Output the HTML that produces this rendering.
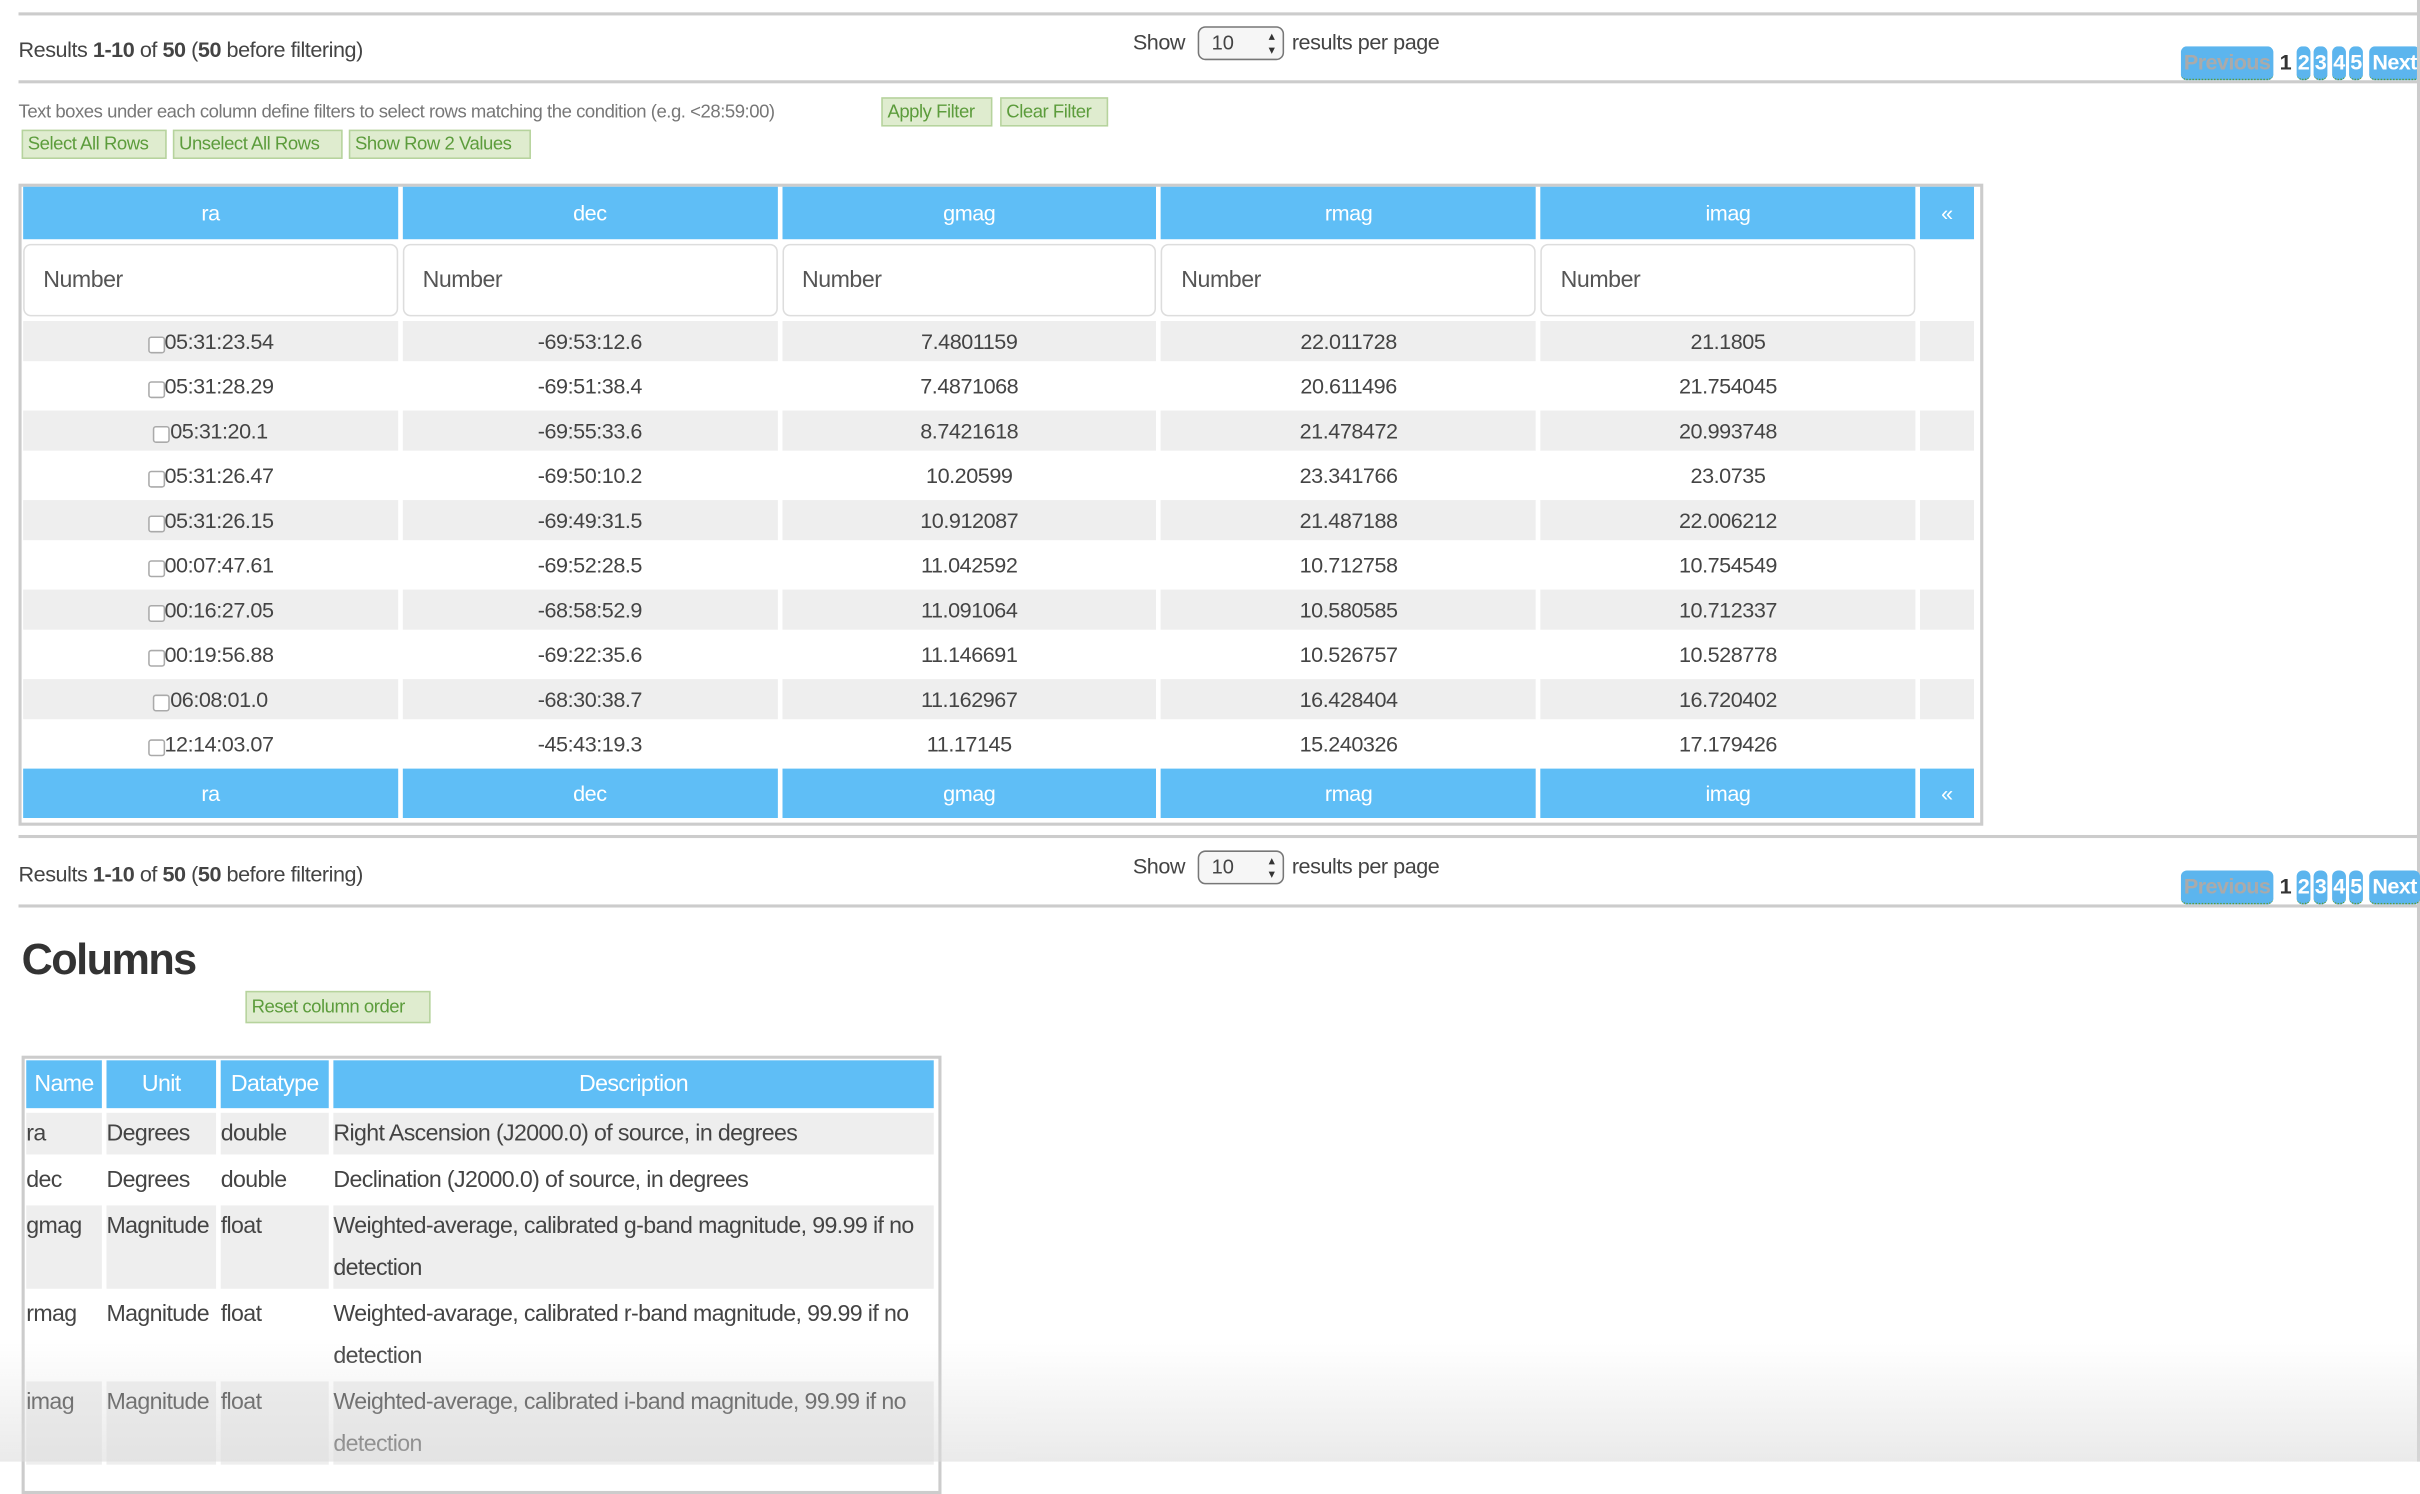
<!DOCTYPE html>
<html><head><meta charset="utf-8"><style>
html,body{margin:0;padding:0;background:#fff;overflow:hidden;width:2420px;height:1462px}
#w{position:absolute;left:0;top:0;width:1568px;height:947px;transform:scale(1.5434);transform-origin:0 0;font-family:"Liberation Sans",sans-serif;color:#444}
.a{position:absolute}
.hl{position:absolute;left:12px;right:0;height:2px;background:#ccc}
.res{font-size:14px;letter-spacing:-0.3px}
.btn{position:absolute;background:#dfeccf;border:1px solid #b6d39d;color:#5c9c3c;font-size:12px;letter-spacing:-0.3px;line-height:17px;padding:0 3px;box-sizing:border-box;height:19px;white-space:nowrap}
.sel{position:absolute;width:56px;height:22px;border:1px solid #777;border-radius:5px;box-sizing:border-box;font-size:13px;line-height:20px;padding-left:8px;background:#f6f6f6}
.sel:after{content:"▴\A▾";white-space:pre;position:absolute;right:5px;top:1px;font-size:8px;line-height:9px;color:#333}
.pg{position:absolute;top:30px;height:21px;font-weight:bold;font-size:14px;line-height:21px;color:#fff;letter-spacing:-0.4px}
.pb{background:#5cb5ee;border-radius:4px;border-bottom:1px dotted #5a9a3a;text-align:center}
table{border-collapse:separate;border-spacing:3px;position:absolute}
td,th{padding:0;text-align:center;font-weight:normal;font-size:14px;letter-spacing:-0.3px}
th{background:#5fbef6;color:#fff}
tr.g td{background:#eee}
.inp{border:1px solid #ddd;border-radius:5px;height:47px;box-sizing:border-box;text-align:left;padding-left:12px;line-height:45px;font-size:15px;color:#555;background:#fff}
.cb{display:inline-block;width:9px;height:9px;border:1px solid #aaa;border-radius:2px;vertical-align:-3px;background:#fff}
#ct td{text-align:left;vertical-align:top;line-height:27px;font-size:15px;letter-spacing:-0.4px}
#ct th{font-size:15px;height:31px;letter-spacing:-0.4px}
</style></head><body><div id="w">
<div class="hl" style="top:8px"></div>
<div class="a res" style="left:12px;top:24px">Results <b>1-10</b> of <b>50</b> (<b>50</b> before filtering)</div>
<div class="a res" style="left:734px;top:19px">Show</div>
<div class="sel" style="left:776px;top:17px">10</div>
<div class="a res" style="left:837px;top:19px">results per page</div>
<div class="hl" style="top:52px"></div>
<div class="pg pb" style="left:1413px;width:60px;color:#aaa">Previous</div>
<div class="pg" style="left:1477px;color:#333">1</div>
<div class="pg pb" style="left:1488px;width:9px">2</div>
<div class="pg pb" style="left:1499px;width:9px">3</div>
<div class="pg pb" style="left:1511px;width:9px">4</div>
<div class="pg pb" style="left:1522px;width:9px">5</div>
<div class="pg pb" style="left:1535px;width:33px">Next</div>
<div class="a" style="left:1566px;top:0;width:2px;height:947px;background:#ccc"></div>

<div class="a" style="left:12px;top:65px;font-size:12px;letter-spacing:-0.3px;color:#777">Text boxes under each column define filters to select rows matching the condition (e.g. &lt;28:59:00)</div>
<div class="btn" style="left:571px;top:63px;width:72px">Apply Filter</div>
<div class="btn" style="left:648px;top:63px;width:70px">Clear Filter</div>
<div class="btn" style="left:14px;top:84px;width:94px">Select All Rows</div>
<div class="btn" style="left:112px;top:84px;width:110px">Unselect All Rows</div>
<div class="btn" style="left:226px;top:84px;width:118px">Show Row 2 Values</div>

<div class="a" style="left:12px;top:119px;width:1269px;height:412px;border:2px solid #ccc"></div>
<table style="left:12px;top:118px;width:1270px">
<colgroup><col style="width:243px"><col style="width:243px"><col style="width:243px"><col style="width:243px"><col style="width:243px"><col style="width:35px"></colgroup>
<tr style="height:34px"><th>ra</th><th>dec</th><th>gmag</th><th>rmag</th><th>imag</th><th>«</th></tr>
<tr><td><div class="inp">Number</div></td><td><div class="inp">Number</div></td><td><div class="inp">Number</div></td><td><div class="inp">Number</div></td><td><div class="inp">Number</div></td><td></td></tr>
<tr class="g" style="height:26px"><td><span class="cb"></span>05:31:23.54</td><td>-69:53:12.6</td><td>7.4801159</td><td>22.011728</td><td>21.1805</td><td></td></tr>
<tr style="height:26px"><td><span class="cb"></span>05:31:28.29</td><td>-69:51:38.4</td><td>7.4871068</td><td>20.611496</td><td>21.754045</td><td></td></tr>
<tr class="g" style="height:26px"><td><span class="cb"></span>05:31:20.1</td><td>-69:55:33.6</td><td>8.7421618</td><td>21.478472</td><td>20.993748</td><td></td></tr>
<tr style="height:26px"><td><span class="cb"></span>05:31:26.47</td><td>-69:50:10.2</td><td>10.20599</td><td>23.341766</td><td>23.0735</td><td></td></tr>
<tr class="g" style="height:26px"><td><span class="cb"></span>05:31:26.15</td><td>-69:49:31.5</td><td>10.912087</td><td>21.487188</td><td>22.006212</td><td></td></tr>
<tr style="height:26px"><td><span class="cb"></span>00:07:47.61</td><td>-69:52:28.5</td><td>11.042592</td><td>10.712758</td><td>10.754549</td><td></td></tr>
<tr class="g" style="height:26px"><td><span class="cb"></span>00:16:27.05</td><td>-68:58:52.9</td><td>11.091064</td><td>10.580585</td><td>10.712337</td><td></td></tr>
<tr style="height:26px"><td><span class="cb"></span>00:19:56.88</td><td>-69:22:35.6</td><td>11.146691</td><td>10.526757</td><td>10.528778</td><td></td></tr>
<tr class="g" style="height:26px"><td><span class="cb"></span>06:08:01.0</td><td>-68:30:38.7</td><td>11.162967</td><td>16.428404</td><td>16.720402</td><td></td></tr>
<tr style="height:26px"><td><span class="cb"></span>12:14:03.07</td><td>-45:43:19.3</td><td>11.17145</td><td>15.240326</td><td>17.179426</td><td></td></tr>
<tr style="height:32px"><th>ra</th><th>dec</th><th>gmag</th><th>rmag</th><th>imag</th><th>«</th></tr>
</table>

<div class="hl" style="top:541px"></div>
<div class="a res" style="left:12px;top:558px">Results <b>1-10</b> of <b>50</b> (<b>50</b> before filtering)</div>
<div class="a res" style="left:734px;top:553px">Show</div>
<div class="sel" style="left:776px;top:551px">10</div>
<div class="a res" style="left:837px;top:553px">results per page</div>
<div class="hl" style="top:586px"></div>
<div class="pg pb" style="left:1413px;top:564px;width:60px;color:#aaa">Previous</div>
<div class="pg" style="left:1477px;top:564px;color:#333">1</div>
<div class="pg pb" style="left:1488px;top:564px;width:9px">2</div>
<div class="pg pb" style="left:1499px;top:564px;width:9px">3</div>
<div class="pg pb" style="left:1511px;top:564px;width:9px">4</div>
<div class="pg pb" style="left:1522px;top:564px;width:9px">5</div>
<div class="pg pb" style="left:1535px;top:564px;width:33px">Next</div>

<div class="a" style="left:14px;top:606px;font-size:28px;font-weight:bold;letter-spacing:-1px;color:#333">Columns</div>
<div class="btn" style="left:159px;top:642px;width:120px;height:21px;line-height:19px">Reset column order</div>

<div class="a" style="left:14px;top:684px;width:592px;height:280px;border:2px solid #ccc"></div>
<table id="ct" style="left:14px;top:684px;width:594px">
<colgroup><col style="width:49px"><col style="width:71px"><col style="width:70px"><col></colgroup>
<tr><th>Name</th><th>Unit</th><th>Datatype</th><th>Description</th></tr>
<tr class="g"><td>ra</td><td>Degrees</td><td>double</td><td>Right Ascension (J2000.0) of source, in degrees</td></tr>
<tr><td>dec</td><td>Degrees</td><td>double</td><td>Declination (J2000.0) of source, in degrees</td></tr>
<tr class="g"><td>gmag</td><td>Magnitude</td><td>float</td><td>Weighted-average, calibrated g-band magnitude, 99.99 if no detection</td></tr>
<tr><td>rmag</td><td>Magnitude</td><td>float</td><td>Weighted-avarage, calibrated r-band magnitude, 99.99 if no detection</td></tr>
<tr class="g"><td>imag</td><td>Magnitude</td><td>float</td><td>Weighted-average, calibrated i-band magnitude, 99.99 if no detection</td></tr>
</table>
<div class="a" style="left:0;top:870px;width:1568px;height:77px;background:linear-gradient(rgba(230,230,230,0),rgba(220,220,220,0.6))"></div>
</div></body></html>
